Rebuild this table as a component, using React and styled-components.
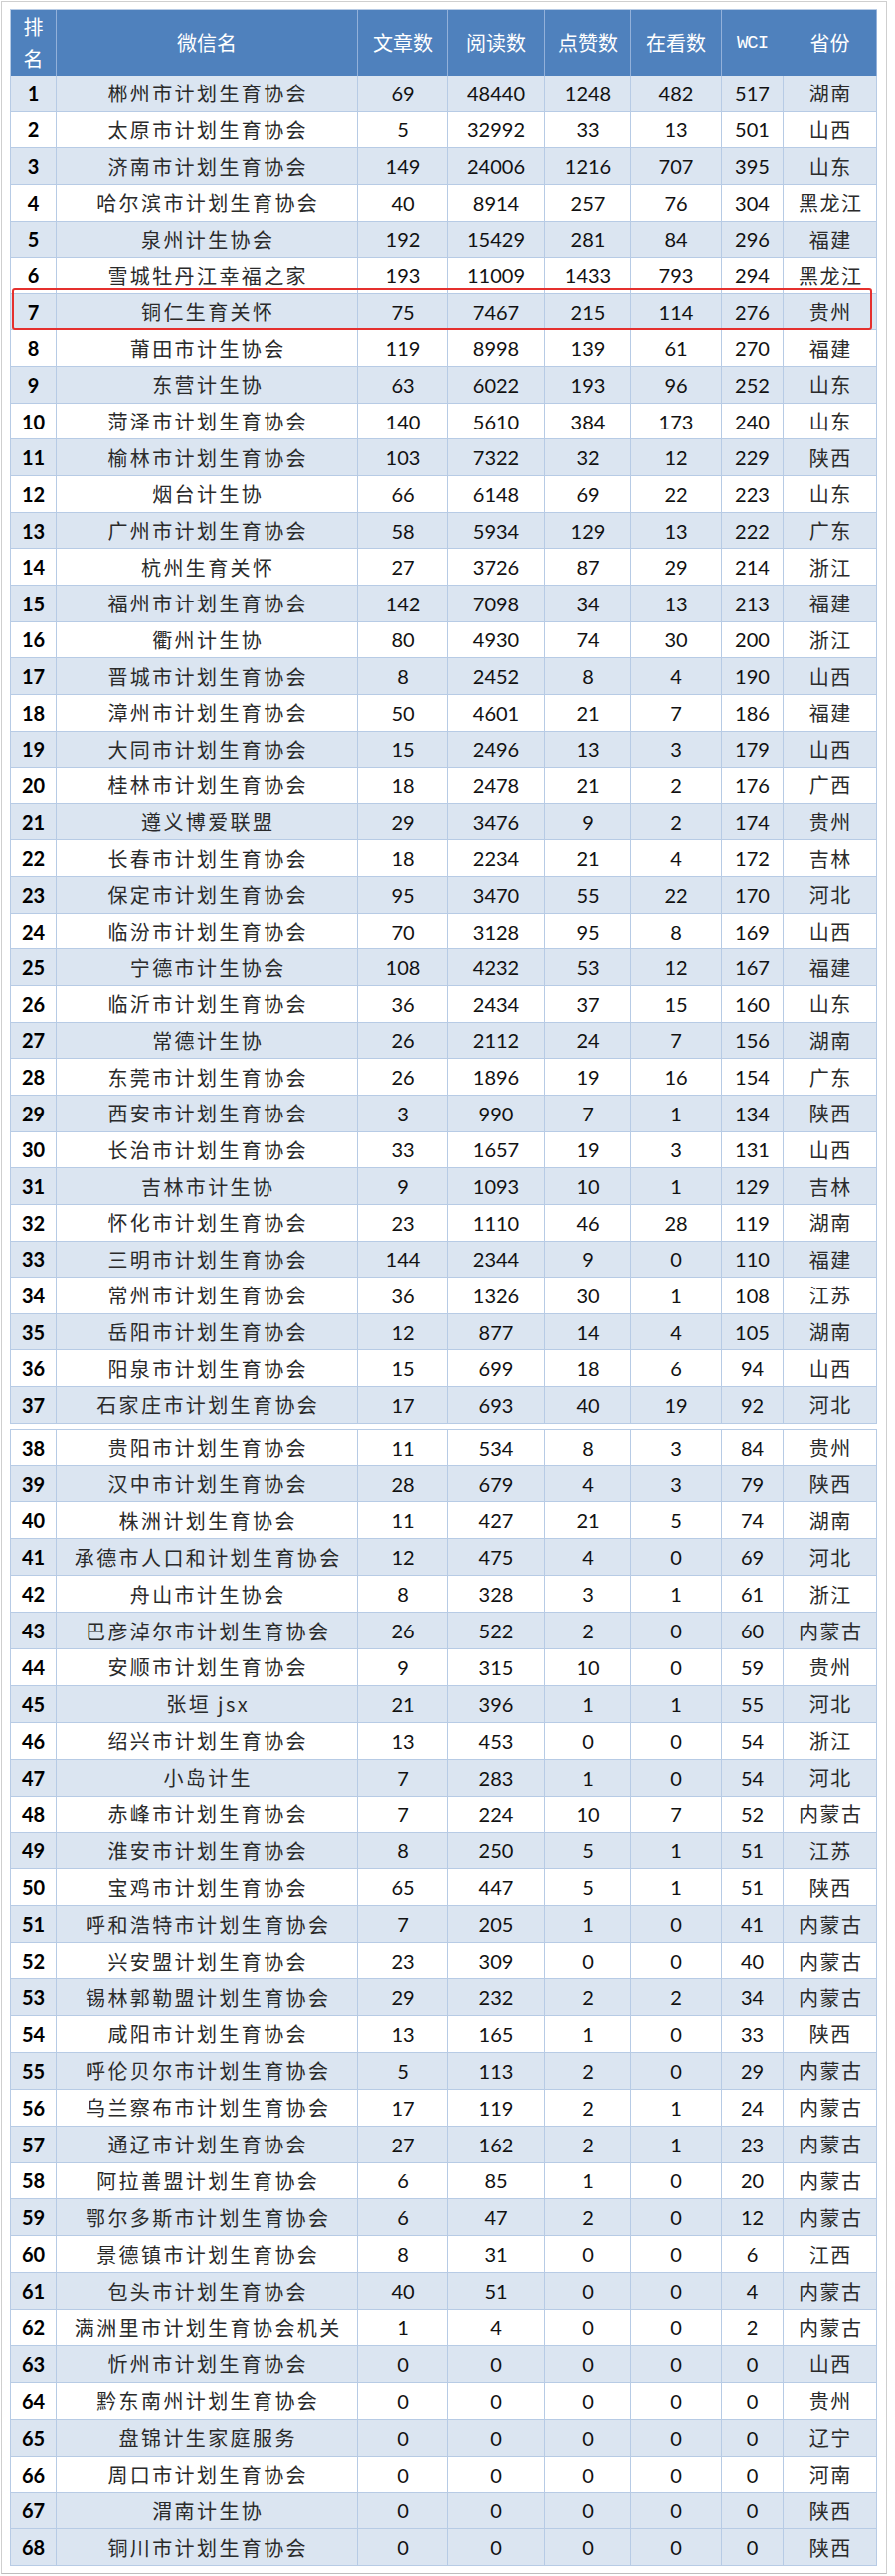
import React from 'react';
import styled, { createGlobalStyle, css } from 'styled-components';

const GlobalStyle = createGlobalStyle`
  html, body { margin: 0; padding: 0; background: #ffffff; }
  body { font-family: "Noto Sans CJK SC", "Noto Sans", sans-serif; }
`;

const COLS = '47px 303px 91px 97px 87px 91px 62px 94px';
const LINE = '#B7CBE5';
const CJK = '"Noto Sans CJK SC", "Noto Sans", sans-serif';
const NUM = 'Lato, "Liberation Sans", sans-serif';

const rows = [
  [1, '郴州市计划生育协会', 69, 48440, 1248, 482, 517, '湖南'],
  [2, '太原市计划生育协会', 5, 32992, 33, 13, 501, '山西'],
  [3, '济南市计划生育协会', 149, 24006, 1216, 707, 395, '山东'],
  [4, '哈尔滨市计划生育协会', 40, 8914, 257, 76, 304, '黑龙江'],
  [5, '泉州计生协会', 192, 15429, 281, 84, 296, '福建'],
  [6, '雪城牡丹江幸福之家', 193, 11009, 1433, 793, 294, '黑龙江'],
  [7, '铜仁生育关怀', 75, 7467, 215, 114, 276, '贵州'],
  [8, '莆田市计生协会', 119, 8998, 139, 61, 270, '福建'],
  [9, '东营计生协', 63, 6022, 193, 96, 252, '山东'],
  [10, '菏泽市计划生育协会', 140, 5610, 384, 173, 240, '山东'],
  [11, '榆林市计划生育协会', 103, 7322, 32, 12, 229, '陕西'],
  [12, '烟台计生协', 66, 6148, 69, 22, 223, '山东'],
  [13, '广州市计划生育协会', 58, 5934, 129, 13, 222, '广东'],
  [14, '杭州生育关怀', 27, 3726, 87, 29, 214, '浙江'],
  [15, '福州市计划生育协会', 142, 7098, 34, 13, 213, '福建'],
  [16, '衢州计生协', 80, 4930, 74, 30, 200, '浙江'],
  [17, '晋城市计划生育协会', 8, 2452, 8, 4, 190, '山西'],
  [18, '漳州市计划生育协会', 50, 4601, 21, 7, 186, '福建'],
  [19, '大同市计划生育协会', 15, 2496, 13, 3, 179, '山西'],
  [20, '桂林市计划生育协会', 18, 2478, 21, 2, 176, '广西'],
  [21, '遵义博爱联盟', 29, 3476, 9, 2, 174, '贵州'],
  [22, '长春市计划生育协会', 18, 2234, 21, 4, 172, '吉林'],
  [23, '保定市计划生育协会', 95, 3470, 55, 22, 170, '河北'],
  [24, '临汾市计划生育协会', 70, 3128, 95, 8, 169, '山西'],
  [25, '宁德市计生协会', 108, 4232, 53, 12, 167, '福建'],
  [26, '临沂市计划生育协会', 36, 2434, 37, 15, 160, '山东'],
  [27, '常德计生协', 26, 2112, 24, 7, 156, '湖南'],
  [28, '东莞市计划生育协会', 26, 1896, 19, 16, 154, '广东'],
  [29, '西安市计划生育协会', 3, 990, 7, 1, 134, '陕西'],
  [30, '长治市计划生育协会', 33, 1657, 19, 3, 131, '山西'],
  [31, '吉林市计生协', 9, 1093, 10, 1, 129, '吉林'],
  [32, '怀化市计划生育协会', 23, 1110, 46, 28, 119, '湖南'],
  [33, '三明市计划生育协会', 144, 2344, 9, 0, 110, '福建'],
  [34, '常州市计划生育协会', 36, 1326, 30, 1, 108, '江苏'],
  [35, '岳阳市计划生育协会', 12, 877, 14, 4, 105, '湖南'],
  [36, '阳泉市计划生育协会', 15, 699, 18, 6, 94, '山西'],
  [37, '石家庄市计划生育协会', 17, 693, 40, 19, 92, '河北'],
  [38, '贵阳市计划生育协会', 11, 534, 8, 3, 84, '贵州'],
  [39, '汉中市计划生育协会', 28, 679, 4, 3, 79, '陕西'],
  [40, '株洲计划生育协会', 11, 427, 21, 5, 74, '湖南'],
  [41, '承德市人口和计划生育协会', 12, 475, 4, 0, 69, '河北'],
  [42, '舟山市计生协会', 8, 328, 3, 1, 61, '浙江'],
  [43, '巴彦淖尔市计划生育协会', 26, 522, 2, 0, 60, '内蒙古'],
  [44, '安顺市计划生育协会', 9, 315, 10, 0, 59, '贵州'],
  [45, '张垣 jsx', 21, 396, 1, 1, 55, '河北'],
  [46, '绍兴市计划生育协会', 13, 453, 0, 0, 54, '浙江'],
  [47, '小岛计生', 7, 283, 1, 0, 54, '河北'],
  [48, '赤峰市计划生育协会', 7, 224, 10, 7, 52, '内蒙古'],
  [49, '淮安市计划生育协会', 8, 250, 5, 1, 51, '江苏'],
  [50, '宝鸡市计划生育协会', 65, 447, 5, 1, 51, '陕西'],
  [51, '呼和浩特市计划生育协会', 7, 205, 1, 0, 41, '内蒙古'],
  [52, '兴安盟计划生育协会', 23, 309, 0, 0, 40, '内蒙古'],
  [53, '锡林郭勒盟计划生育协会', 29, 232, 2, 2, 34, '内蒙古'],
  [54, '咸阳市计划生育协会', 13, 165, 1, 0, 33, '陕西'],
  [55, '呼伦贝尔市计划生育协会', 5, 113, 2, 0, 29, '内蒙古'],
  [56, '乌兰察布市计划生育协会', 17, 119, 2, 1, 24, '内蒙古'],
  [57, '通辽市计划生育协会', 27, 162, 2, 1, 23, '内蒙古'],
  [58, '阿拉善盟计划生育协会', 6, 85, 1, 0, 20, '内蒙古'],
  [59, '鄂尔多斯市计划生育协会', 6, 47, 2, 0, 12, '内蒙古'],
  [60, '景德镇市计划生育协会', 8, 31, 0, 0, 6, '江西'],
  [61, '包头市计划生育协会', 40, 51, 0, 0, 4, '内蒙古'],
  [62, '满洲里市计划生育协会机关', 1, 4, 0, 0, 2, '内蒙古'],
  [63, '忻州市计划生育协会', 0, 0, 0, 0, 0, '山西'],
  [64, '黔东南州计划生育协会', 0, 0, 0, 0, 0, '贵州'],
  [65, '盘锦计生家庭服务', 0, 0, 0, 0, 0, '辽宁'],
  [66, '周口市计划生育协会', 0, 0, 0, 0, 0, '河南'],
  [67, '渭南计生协', 0, 0, 0, 0, 0, '陕西'],
  [68, '铜川市计划生育协会', 0, 0, 0, 0, 0, '陕西'],
];

const Frame = styled.div`
  width: 872px;
  margin: 1px 0 0 1px;
  padding: 7px 9px 7px 8px;
  border: 1px solid #cfcfcf;
  border-bottom-color: #bdbdbd;
`;

const Sheet = styled.div`
  width: 872px;
  box-sizing: border-box;
  border-left: 1px solid ${LINE};
  border-top: 1px solid ${LINE};
  & + & { margin-top: 5px; }
`;

const HeaderRow = styled.div`
  display: grid;
  grid-template-columns: 46px 303px 91px 97px 87px 91px 62px 94px;
  height: 66px;
  background: #4F81BD;
`;

const HeadCell = styled.div`
  display: flex;
  align-items: center;
  justify-content: center;
  text-align: center;
  color: #ffffff;
  font-family: ${CJK};
  font-size: 20px;
  line-height: 32px;
  border-right: 1px solid ${p => (p.$noLine ? '#4F81BD' : '#93B1DA')};
  ${p => p.$mono && css`
    font-family: "Liberation Mono", "DejaVu Sans Mono", monospace;
    font-size: 19px;
    letter-spacing: -1px;
  `}
`;

const Row = styled.div`
  display: grid;
  grid-template-columns: 46px 303px 91px 97px 87px 91px 62px 94px;
  height: ${p => p.$h}px;
  background: ${p => (p.$shade ? '#DBE5F1' : '#ffffff')};
  position: relative;
  ${p => p.$mark && css`
    &::after {
      content: '';
      position: absolute;
      left: 1px;
      right: 5px;
      top: -6px;
      bottom: 0;
      border: 2px solid #E5302E;
      border-radius: 3px;
      pointer-events: none;
    }
  `}
`;

const Cell = styled.div`
  display: flex;
  align-items: center;
  justify-content: center;
  box-sizing: border-box;
  border-right: 1px solid ${LINE};
  border-bottom: 1px solid ${LINE};
  white-space: nowrap;
  overflow: hidden;
`;

const RankCell = styled(Cell)`
  font-family: ${NUM};
  font-weight: 700;
  font-size: 20px;
  color: #000;
`;

const NameCell = styled(Cell)`
  font-family: ${CJK};
  font-size: 20px;
  letter-spacing: 2.4px;
  padding-left: 2.4px;
  color: #2a2a2a;
`;

const NumCell = styled(Cell)`
  font-family: ${NUM};
  font-size: 20px;
  color: #111;
`;

const ProvCell = styled(Cell)`
  font-family: ${CJK};
  font-size: 20px;
  letter-spacing: 1.6px;
  padding-left: 1.6px;
  color: #2a2a2a;
`;

function DataRow({ r, h, shade }) {
  const [rank, name, a, b, c, d, w, prov] = r;
  return (
    <Row $h={h} $shade={shade} $mark={rank === 7}>
      <RankCell>{rank}</RankCell>
      <NameCell>{name}</NameCell>
      <NumCell>{a}</NumCell>
      <NumCell>{b}</NumCell>
      <NumCell>{c}</NumCell>
      <NumCell>{d}</NumCell>
      <NumCell>{w}</NumCell>
      <ProvCell>{prov}</ProvCell>
    </Row>
  );
}

export default function App() {
  const first = rows.slice(0, 37);
  const second = rows.slice(37);
  return (
    <>
      <GlobalStyle />
      <Frame>
        <Sheet>
          <HeaderRow>
            <HeadCell>排<br />名</HeadCell>
            <HeadCell>微信名</HeadCell>
            <HeadCell>文章数</HeadCell>
            <HeadCell>阅读数</HeadCell>
            <HeadCell>点赞数</HeadCell>
            <HeadCell>在看数</HeadCell>
            <HeadCell $mono $noLine>WCI</HeadCell>
            <HeadCell>省份</HeadCell>
          </HeaderRow>
          {first.map(r => (
            <DataRow key={r[0]} r={r} h={36.65} shade={r[0] % 2 === 1} />
          ))}
        </Sheet>
        <Sheet>
          {second.map(r => (
            <DataRow key={r[0]} r={r} h={36.9} shade={r[0] % 2 === 1 || r[0] === 68} />
          ))}
        </Sheet>
      </Frame>
    </>
  );
}
